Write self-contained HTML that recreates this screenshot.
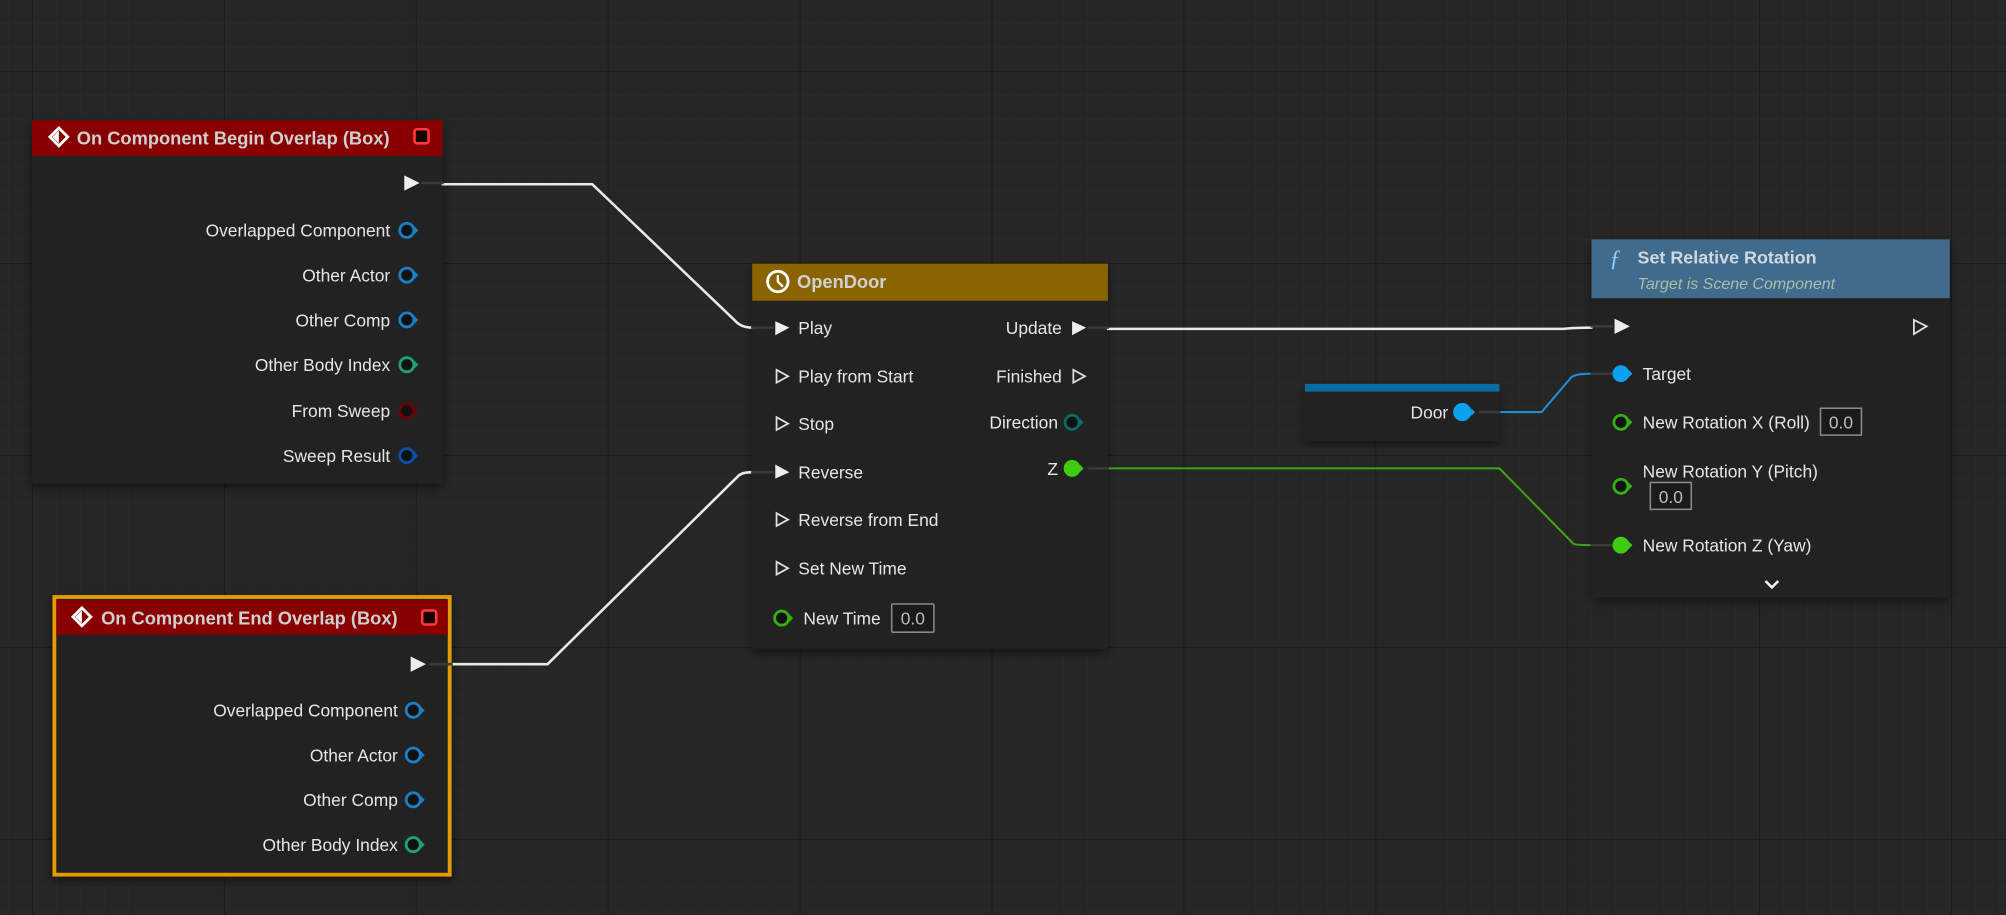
<!DOCTYPE html>
<html><head><meta charset="utf-8"><style>
html,body{margin:0;padding:0;background:#262626;overflow:hidden}
svg{display:block}
text{font-family:"Liberation Sans",sans-serif;fill:#e6e6e6;font-size:13.6px}
.h{font-weight:bold;font-size:14.3px;fill:#d0d0d0}
circle{stroke-width:2.2}
</style></head><body>
<svg width="2006" height="915" viewBox="0 0 1568 715" preserveAspectRatio="none" xmlns="http://www.w3.org/2000/svg">
<defs>
<pattern id="minor" x="25" y="55.5" width="18.75" height="18.75" patternUnits="userSpaceOnUse">
<path d="M0 0H18.75M0 0V18.75" stroke="#2b2b2b" stroke-width="1" fill="none"/>
</pattern>
<pattern id="major" x="25" y="55.5" width="150" height="150" patternUnits="userSpaceOnUse">
<path d="M0 0H150M0 0V150" stroke="#1b1b1b" stroke-width="1.6" fill="none"/>
</pattern>
<filter id="sh" x="-10%" y="-10%" width="120%" height="120%"><feDropShadow dx="0" dy="3" stdDeviation="4" flood-color="#000" flood-opacity="0.5"/></filter>
</defs>
<rect width="1568" height="715" fill="#262626"/>
<rect width="1568" height="715" fill="url(#minor)"/>
<rect width="1568" height="715" fill="url(#major)"/>

<!-- Node 1 -->
<g filter="url(#sh)"><rect x="25" y="94" width="321" height="284" fill="#212121"/></g>
<rect x="25" y="94" width="321" height="28" fill="#880000"/>
<path d="M46 100 L53 107 L46 114 L39 107Z" fill="none" stroke="#fff" stroke-width="2.2"/>
<path d="M46 102 L46 112 L41 107Z" fill="#fff"/>
<text x="60" y="113" class="h">On Component Begin Overlap (Box)</text>
<rect x="324" y="101" width="11" height="11" rx="2" fill="#1a0000" stroke="#ff3838" stroke-width="2"/>
<polygon points="316,137 328,143 316,149" fill="#eee"/>
<g text-anchor="end">
<text x="305" y="185">Overlapped Component</text>
<text x="305" y="220">Other Actor</text>
<text x="305" y="255">Other Comp</text>
<text x="305" y="290">Other Body Index</text>
<text x="305" y="326">From Sweep</text>
<text x="305" y="361">Sweep Result</text>
</g>

<!-- Node 2 -->
<g filter="url(#sh)"><rect x="41" y="465" width="312" height="220" fill="#212121"/></g>
<rect x="42.5" y="466.5" width="309" height="217" fill="none" stroke="#e69a00" stroke-width="3"/>
<rect x="44" y="469" width="306" height="27" fill="#880000"/>
<path d="M64 475 L71 482 L64 489 L57 482Z" fill="none" stroke="#fff" stroke-width="2.2"/>
<path d="M64 477 L64 487 L59 482Z" fill="#fff"/>
<text x="79" y="488" class="h">On Component End Overlap (Box)</text>
<rect x="330" y="477" width="11" height="11" rx="2" fill="#1a0000" stroke="#ff3838" stroke-width="2"/>
<polygon points="321,513 333,519 321,525" fill="#eee"/>
<g text-anchor="end">
<text x="311" y="560">Overlapped Component</text>
<text x="311" y="595">Other Actor</text>
<text x="311" y="630">Other Comp</text>
<text x="311" y="665">Other Body Index</text>
</g>

<!-- Node 3 OpenDoor -->
<g filter="url(#sh)"><rect x="588" y="206" width="278" height="301" fill="#212121"/></g>
<rect x="588" y="206" width="278" height="29" fill="#8a6400"/>
<circle cx="608" cy="220" r="8" fill="none" stroke="#fff" stroke-width="1.8"/>
<path d="M608 215 V220 L612 224" fill="none" stroke="#fff" stroke-width="1.8"/>
<text x="623" y="225" class="h">OpenDoor</text>
<polygon points="606,251 617,256 606,262" fill="#eee"/>
<polygon points="607,289 616,294 607,299" fill="none" stroke="#ddd" stroke-width="1.4"/>
<polygon points="607,326 616,331 607,336" fill="none" stroke="#ddd" stroke-width="1.4"/>
<polygon points="606,363 617,369 606,374" fill="#eee"/>
<polygon points="607,401 616,406 607,411" fill="none" stroke="#ddd" stroke-width="1.4"/>
<polygon points="607,439 616,444 607,449" fill="none" stroke="#ddd" stroke-width="1.4"/>
<text x="624" y="261">Play</text>
<text x="624" y="299">Play from Start</text>
<text x="624" y="336">Stop</text>
<text x="624" y="374">Reverse</text>
<text x="624" y="411">Reverse from End</text>
<text x="624" y="449">Set New Time</text>
<text x="628" y="488">New Time</text>
<rect x="697" y="472" width="33" height="22" fill="#1a1a1a" stroke="#8a8a8a" stroke-width="1.2" rx="1"/>
<text x="713.5" y="488" text-anchor="middle" style="fill:#bbb">0.0</text>
<g text-anchor="end">
<text x="830" y="261">Update</text>
<text x="830" y="299">Finished</text>
<text x="827" y="335">Direction</text>
<text x="827" y="371">Z</text>
</g>
<polygon points="838,251 849,256 838,262" fill="#eee"/>
<polygon points="839,289 848,294 839,299" fill="none" stroke="#ddd" stroke-width="1.4"/>

<!-- Node 4 Door -->
<g filter="url(#sh)"><rect x="1020" y="300" width="152" height="45" fill="#212121"/></g>
<rect x="1020" y="300" width="152" height="6" fill="#0a6b9e"/>
<text x="1132" y="327" text-anchor="end">Door</text>

<!-- Node 5 Set Relative Rotation -->
<g filter="url(#sh)"><rect x="1244" y="187" width="280" height="280" fill="#212121"/></g>
<rect x="1244" y="187" width="280" height="46" fill="#406b8c"/>
<text x="1258" y="208" style="font-family:'Liberation Serif',serif;font-style:italic;font-size:18px;fill:#8ecfff">ƒ</text>
<text x="1280" y="206" class="h" style="fill:#cfd8e0;font-size:14px">Set Relative Rotation</text>
<text x="1280" y="226" style="font-style:italic;font-size:12.5px;fill:#a9bfa9">Target is Scene Component</text>
<polygon points="1262,249 1274,255 1262,261" fill="#eee"/>
<polygon points="1496,250 1506,255 1496,261" fill="none" stroke="#ddd" stroke-width="1.4"/>
<text x="1284" y="297">Target</text>
<text x="1284" y="335">New Rotation X (Roll)</text>
<rect x="1423" y="319" width="32" height="21" fill="#1a1a1a" stroke="#8a8a8a" stroke-width="1.2"/>
<text x="1439" y="335" text-anchor="middle" style="fill:#bbb">0.0</text>
<text x="1284" y="373">New Rotation Y (Pitch)</text>
<rect x="1290" y="377" width="32" height="21" fill="#1a1a1a" stroke="#8a8a8a" stroke-width="1.2"/>
<text x="1306" y="393" text-anchor="middle" style="fill:#bbb">0.0</text>
<text x="1284" y="431">New Rotation Z (Yaw)</text>
<path d="M1380 454 L1385 459 L1390 454" fill="none" stroke="#eee" stroke-width="2"/>

<!-- wires -->
<g fill="none" stroke-linecap="round" stroke-linejoin="round">
<path d="M346 144 H463 L574 250 Q579 256 588 256" stroke="#eaeaea" stroke-width="2"/>
<path d="M353 519 H428 L577 372 Q580 369 588 369" stroke="#eaeaea" stroke-width="2"/>
<path d="M866 257 H1222 Q1230 256 1244 256" stroke="#eaeaea" stroke-width="2"/>
<path d="M866 366 H1172 L1230 425 Q1232 426 1244 426" stroke="#3da316" stroke-width="1.6"/>
<path d="M1172 322 H1205 L1228 295 Q1231 292 1244 292" stroke="#1d8fd6" stroke-width="1.6"/>
<path d="M330 143 H346 M336 519 H353 M588 256 H604 M588 369 H604 M851 256 H866 M851 366 H866 M1157 322 H1172 M1244 255 H1260 M1244 292 H1260 M1244 426 H1260" stroke="#3a3a3a" stroke-width="2"/>
</g>

<!-- pins -->
<g>
<circle cx="318" cy="180" r="5.5" fill="#111" stroke="#1a7fc4"/><polygon points="324,177 327,180 324,183" fill="#1a7fc4"/>
<circle cx="318" cy="215" r="5.5" fill="#111" stroke="#1a7fc4"/><polygon points="324,212 327,215 324,218" fill="#1a7fc4"/>
<circle cx="318" cy="250" r="5.5" fill="#111" stroke="#1a7fc4"/><polygon points="324,247 327,250 324,253" fill="#1a7fc4"/>
<circle cx="318" cy="285" r="5.5" fill="#111" stroke="#20a07a"/><polygon points="324,282 327,285 324,288" fill="#20a07a"/>
<circle cx="318" cy="321" r="5.5" fill="#111" stroke="#6e0000"/><polygon points="324,318 327,321 324,324" fill="#6e0000"/>
<circle cx="318" cy="356" r="5.5" fill="#111" stroke="#0a4fa8"/><polygon points="324,353 327,356 324,359" fill="#0a4fa8"/>

<circle cx="323" cy="555" r="5.5" fill="#111" stroke="#1a7fc4"/><polygon points="329,552 332,555 329,558" fill="#1a7fc4"/>
<circle cx="323" cy="590" r="5.5" fill="#111" stroke="#1a7fc4"/><polygon points="329,587 332,590 329,593" fill="#1a7fc4"/>
<circle cx="323" cy="625" r="5.5" fill="#111" stroke="#1a7fc4"/><polygon points="329,622 332,625 329,628" fill="#1a7fc4"/>
<circle cx="323" cy="660" r="5.5" fill="#111" stroke="#20a07a"/><polygon points="329,657 332,660 329,663" fill="#20a07a"/>

<circle cx="611" cy="483" r="5.5" fill="#111" stroke="#34b012"/><polygon points="617,480 620,483 617,486" fill="#34b012"/>
<circle cx="838" cy="330" r="5.5" fill="#111" stroke="#0c6a6a"/><polygon points="844,327 847,330 844,333" fill="#0c6a6a"/>
<circle cx="838" cy="366" r="5.5" fill="#3dcc10" stroke="#3dcc10"/><polygon points="844,363 847,366 844,369" fill="#3dcc10"/>

<circle cx="1143" cy="322" r="6" fill="#0aa2f0" stroke="#0aa2f0"/><polygon points="1150,319 1153,322 1150,325" fill="#0aa2f0"/>

<circle cx="1267" cy="292" r="5.5" fill="#0aa2f0" stroke="#0aa2f0"/><polygon points="1273,289 1276,292 1273,295" fill="#0aa2f0"/>
<circle cx="1267" cy="330" r="5.5" fill="#111" stroke="#34b012"/><polygon points="1273,327 1276,330 1273,333" fill="#34b012"/>
<circle cx="1267" cy="380" r="5.5" fill="#111" stroke="#34b012"/><polygon points="1273,377 1276,380 1273,383" fill="#34b012"/>
<circle cx="1267" cy="426" r="5.5" fill="#3dcc10" stroke="#3dcc10"/><polygon points="1273,423 1276,426 1273,429" fill="#3dcc10"/>
</g>
</svg>
</body></html>
